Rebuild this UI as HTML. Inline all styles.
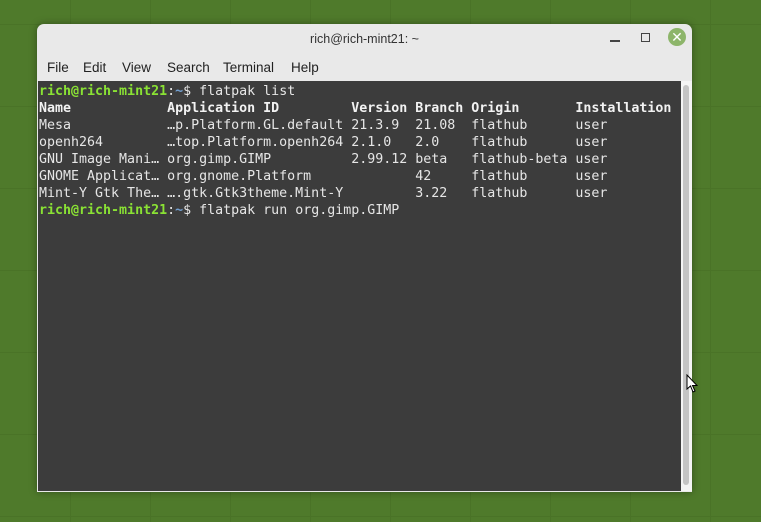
<!DOCTYPE html>
<html><head><style>
body{margin:0;width:761px;height:522px;background:#4f7a2b;position:relative;overflow:hidden;font-family:"Liberation Sans","DejaVu Sans",sans-serif;}
.grid{position:absolute;inset:0;background-image:linear-gradient(#466e25 1px,transparent 1px),linear-gradient(90deg,#466e25 1px,transparent 1px);background-size:80px 82px;background-position:-10px 24px;opacity:.5}
.win{position:absolute;left:37px;top:24px;width:655px;height:468px;background:#e9e9e9;border-radius:7px 7px 0 0;box-shadow:0 0 8px rgba(0,0,0,.35)}
.title{position:absolute;top:8px;left:0;right:0;text-align:center;font-size:12.5px;color:#333}
.menu span{position:absolute;top:36px;font-size:13.5px;color:#222}
.term{position:absolute;left:1px;top:57px;width:642px;height:408px;padding-top:2px;background:#3c3c3c;font-family:"DejaVu Sans Mono",monospace;font-size:13.3px;line-height:17px;color:#e6e6e6;white-space:pre;padding-left:1px}
.g{color:#8ae234;font-weight:bold}.b{color:#729fcf;font-weight:bold}.h{font-weight:bold;color:#f2f2f2}
.sb{position:absolute;left:644px;top:57px;width:11px;height:410px;background:#f4f4f4}
.th{position:absolute;left:2px;top:4px;width:6px;height:400px;background:#c4c4c4;border-radius:3px}
</style></head><body>
<div class="grid"></div>
<div class="win">
<div class="title">rich@rich-mint21: ~</div>
<div style="position:absolute;left:573px;top:16px;width:10px;height:1.5px;background:#444"></div>
<div style="position:absolute;left:604px;top:9px;width:7px;height:7px;border:1.3px solid #444"></div>
<div style="position:absolute;left:631px;top:4px;width:18px;height:18px;border-radius:50%;background:#8db56a;color:#fff;font-size:14px;line-height:18px;text-align:center">✕</div>
<div class="menu"><span style="left:10px">File</span><span style="left:46px">Edit</span><span style="left:85px">View</span><span style="left:130px">Search</span><span style="left:186px">Terminal</span><span style="left:254px">Help</span></div>
<div class="term"><span class="g">rich@rich-mint21</span>:<span class="b">~</span>$ flatpak list
<span class="h">Name            Application ID         Version Branch Origin       Installation</span>
Mesa            …p.Platform.GL.default 21.3.9  21.08  flathub      user
openh264        …top.Platform.openh264 2.1.0   2.0    flathub      user
GNU Image Mani… org.gimp.GIMP          2.99.12 beta   flathub-beta user
GNOME Applicat… org.gnome.Platform             42     flathub      user
Mint-Y Gtk The… ….gtk.Gtk3theme.Mint-Y         3.22   flathub      user
<span class="g">rich@rich-mint21</span>:<span class="b">~</span>$ flatpak run org.gimp.GIMP</div>
<div class="sb"><div class="th"></div></div>
</div>
<svg style="position:absolute;left:686px;top:374px" width="12" height="20"><path d="M1 1 L1 15 L4.5 12 L7 18 L9 17 L6.5 11.5 L11 11.5 Z" fill="#fff" stroke="#000" stroke-width="1"/></svg>
</body></html>
